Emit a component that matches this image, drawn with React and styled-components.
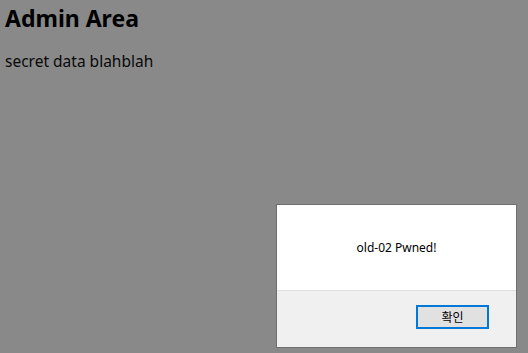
import styled, { createGlobalStyle } from "styled-components";

const GlobalStyle = createGlobalStyle`
  html, body {
    margin: 0;
    padding: 0;
    background: #ffffff;
  }
  body {
    font-family: "Noto Sans", "Noto Sans CJK KR", sans-serif;
    color: #000;
    width: 528px;
    height: 353px;
    overflow: hidden;
  }
`;

const Page = styled.div`
  padding: 0 5px;
`;

const Title = styled.h1`
  margin: 0;
  padding-top: 2px;
  font-size: 23px;
  font-weight: 700;
  line-height: 32px;
`;

const Text = styled.p`
  margin: 16px 0 0;
  font-size: 15.5px;
  line-height: 22px;
  color: #111;
`;

const Overlay = styled.div`
  position: fixed;
  inset: 0;
  background: rgba(0, 0, 0, 0.463);
`;

const Dialog = styled.div`
  position: absolute;
  left: 276px;
  top: 204px;
  width: 239px;
  border: 1px solid #6f6f6f;
  background: #fff;
  display: flex;
  flex-direction: column;
`;

const Message = styled.div`
  height: 85px;
  display: flex;
  align-items: center;
  justify-content: center;
  font-size: 12px;
  color: #000;
`;

const Footer = styled.div`
  height: 57px;
  background: #f0f0f0;
  border-top: 1px solid #dfdfdf;
  display: flex;
  justify-content: flex-end;
  align-items: flex-start;
  padding: 14px 27px 0 0;
  box-sizing: border-box;
`;

const Button = styled.button`
  width: 73px;
  height: 24px;
  background: #e1e1e1;
  border: 2px solid #0078d7;
  font-family: "Noto Sans CJK KR", sans-serif;
  font-size: 12px;
  color: #000;
  padding: 0;
  line-height: 18px;
`;

export default function App() {
  return (
    <>
      <GlobalStyle />
      <Page>
        <Title>Admin Area</Title>
        <Text>secret data blahblah</Text>
      </Page>
      <Overlay>
        <Dialog>
          <Message>old-02 Pwned!</Message>
          <Footer>
            <Button>확인</Button>
          </Footer>
        </Dialog>
      </Overlay>
    </>
  );
}
